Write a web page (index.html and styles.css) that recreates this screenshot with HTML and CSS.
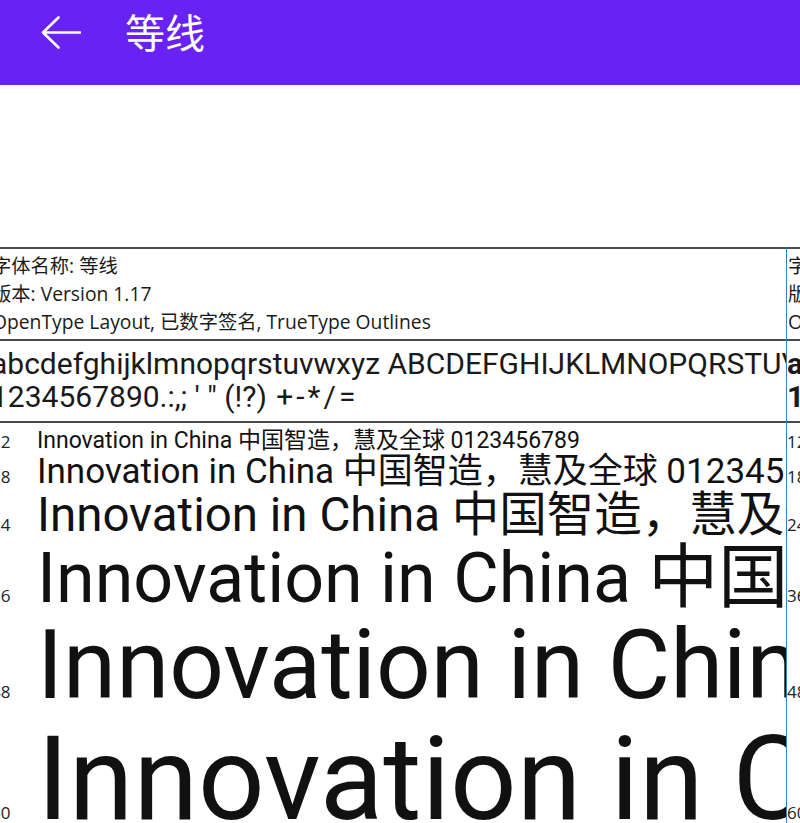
FILE: index.html
```html
<!DOCTYPE html>
<html lang="zh-CN">
<head>
    <meta charset="UTF-8">
    <title>等线</title>
    <link rel="stylesheet" href="styles.css">
</head>
<body>
<header class="appbar">
    <span class="back">
        <svg width="40" height="34" viewBox="0 0 40 34">
            <path d="M39 16.5 H2.5 M17.5 1.5 L2 16.5 L17.5 31.5" fill="none" stroke="#fff" stroke-width="2.6" stroke-linecap="round" stroke-linejoin="round"/>
        </svg>
    </span>
    <h1 class="title">等线</h1>
</header>
<div class="blank"></div>
<div class="strip">
    <section class="panel">
        <div class="info">
            <p>字体名称: 等线</p>
            <p>版本: Version 1.17</p>
            <p>OpenType Layout, 已数字签名, TrueType Outlines</p>
        </div>
        <div class="alphabet">
            <p>abcdefghijklmnopqrstuvwxyz ABCDEFGHIJKLMNOPQRSTUVWXYZ</p>
            <p>1234567890.:,; ' " (!?) <span class="ops">+-*/=</span></p>
        </div>
        <div class="samples">
            <p class="row s12"><span class="pt">12</span><span class="txt">Innovation in China 中国智造，慧及全球 0123456789</span></p>
            <p class="row s18"><span class="pt">18</span><span class="txt">Innovation in China 中国智造，慧及全球 0123456789</span></p>
            <p class="row s24"><span class="pt">24</span><span class="txt">Innovation in China 中国智造，慧及全球 0123456789</span></p>
            <p class="row s36"><span class="pt">36</span><span class="txt">Innovation in China 中国智造，慧及全球 0123456789</span></p>
            <p class="row s48"><span class="pt">48</span><span class="txt">Innovation in China 中国智造，慧及全球 0123456789</span></p>
            <p class="row s60"><span class="pt">60</span><span class="txt">Innovation in China 中国智造，慧及全球 0123456789</span></p>
        </div>
    </section>
    <section class="panel bold">
        <div class="info">
            <p>字体名称: 等线 Bold</p>
            <p>版本: Version 1.17</p>
            <p>OpenType Layout, 已数字签名, TrueType Outlines</p>
        </div>
        <div class="alphabet">
            <p>abcdefghijklmnopqrstuvwxyz ABCDEFGHIJKLMNOPQRSTUVWXYZ</p>
            <p>1234567890.:,; ' " (!?) <span class="ops">+-*/=</span></p>
        </div>
        <div class="samples">
            <p class="row s12"><span class="pt">12</span><span class="txt">Innovation in China 中国智造，慧及全球 0123456789</span></p>
            <p class="row s18"><span class="pt">18</span><span class="txt">Innovation in China 中国智造，慧及全球 0123456789</span></p>
            <p class="row s24"><span class="pt">24</span><span class="txt">Innovation in China 中国智造，慧及全球 0123456789</span></p>
            <p class="row s36"><span class="pt">36</span><span class="txt">Innovation in China 中国智造，慧及全球 0123456789</span></p>
            <p class="row s48"><span class="pt">48</span><span class="txt">Innovation in China 中国智造，慧及全球 0123456789</span></p>
            <p class="row s60"><span class="pt">60</span><span class="txt">Innovation in China 中国智造，慧及全球 0123456789</span></p>
        </div>
    </section>
</div>
</body>
</html>
```

FILE: styles.css
```css
*{
    margin: 0;
    padding: 0;
    box-sizing: border-box;
}
html, body{
    height: 100%;
    overflow: hidden;
    background: #fff;
}
body{
    font-family: Roboto, "Noto Sans CJK SC", sans-serif;
    color: #000;
}
.appbar{
    display: flex;
    align-items: flex-start;
    height: 85px;
    background: #6823f4;
    color: #fff;
}
.back{
    display: flex;
    margin-left: 41px;
    margin-top: 16px;
}
.title{
    margin-left: 44px;
    margin-top: 11px;
    font-family: "Noto Sans CJK SC", sans-serif;
    font-size: 40px;
    font-weight: 400;
    line-height: 1;
}
.blank{
    height: 162px;
}
.strip{
    display: flex;
    margin-left: -9px;
    width: max-content;
}
.panel{
    flex: none;
    width: 796px;
    border-right: 1px solid #3d7fc1;
    overflow: hidden;
}
.panel p{
    white-space: nowrap;
}
.info{
    border-top: 2px solid #4b4b4b;
    border-bottom: 2px solid #4b4b4b;
    padding: 3px 0 3px 1px;
    font-family: "Open Sans", "Noto Sans CJK SC", sans-serif;
    font-size: 19.3px;
    line-height: 28px;
    color: #1a1a1a;
}
.alphabet{
    border-bottom: 2px solid #4b4b4b;
    padding: 6px 0 8px 0;
    font-size: 30px;
    line-height: 33px;
    color: #1a1a1a;
}
.ops{
    letter-spacing: 3px;
    padding-left: 2px;
}
.samples{
    padding-top: 6px;
}
.row{
    display: flex;
    align-items: baseline;
    line-height: 1.06;
}
.pt{
    flex: none;
    width: 46px;
    font-family: "Open Sans", sans-serif;
    font-size: 17px;
    color: #222;
}
.txt{
    color: #111;
}
.bold .alphabet, .bold .txt{
    font-weight: 700;
}
.s12{ font-size: 23px; }
.s18{ font-size: 35px; }
.s24{ font-size: 47.5px; }
.s36{ font-size: 70px; }
.s48{ font-size: 96px; }
.s60{ font-size: 117px; }
```
